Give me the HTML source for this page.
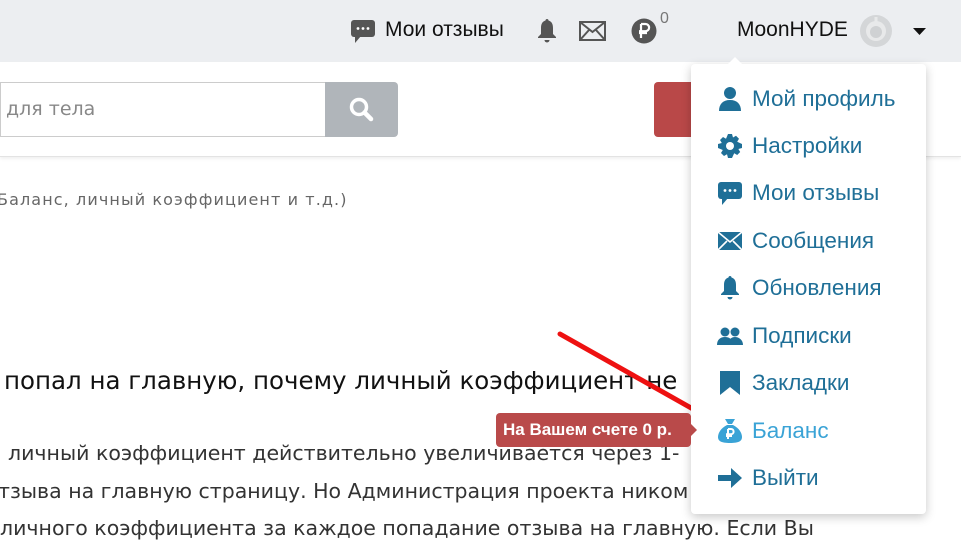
<!DOCTYPE html>
<html><head><meta charset="utf-8"><style>
*{margin:0;padding:0;box-sizing:border-box}
body{width:961px;height:550px;overflow:hidden;background:#fff;position:relative;font-family:"DejaVu Sans","Liberation Sans",sans-serif}
.top{position:absolute;left:0;top:0;width:961px;height:62px;background:#eceef1}
.hdr{position:absolute;left:0;top:62px;width:961px;height:95px;background:#fff;border-bottom:1px solid #e3e3e3;box-shadow:0 2px 3px rgba(0,0,0,.06)}
.t{position:absolute;white-space:nowrap}
.menu{position:absolute;left:691px;top:64px;width:235px;height:450px;background:#fff;border-radius:4px;box-shadow:0 3px 10px rgba(0,0,0,.22)}
.mi{position:absolute;left:26px;font-family:"Liberation Sans",sans-serif;font-size:22.5px;color:#1f6f97;white-space:nowrap;display:flex;align-items:center}
.mi svg{width:26px;height:26px;margin-right:9px;fill:#1f6f97}
p.b{position:absolute;left:0;font-size:20.5px;color:#333;white-space:nowrap}
</style></head><body>
<div class="top"></div>
<svg class="t" style="left:350px;top:19px" width="26" height="25" viewBox="0 0 26 25"><rect x="1" y="1" width="24" height="17" rx="3" fill="#555"/><path d="M5 17 L5 24 L11 17Z" fill="#555"/><circle cx="8" cy="9.5" r="1.4" fill="#fff"/><circle cx="13" cy="9.5" r="1.4" fill="#fff"/><circle cx="18" cy="9.5" r="1.4" fill="#fff"/></svg>
<div class="t" style="left:385px;top:18px;font-family:'Liberation Sans',sans-serif;font-size:21px;color:#111">Мои отзывы</div>
<svg class="t" style="left:536px;top:18px" width="22" height="26" viewBox="0 0 22 26"><path d="M11 1c1 0 1.5.7 1.5 1.5C16 3.5 17 6.5 17 10v6l3 3v1H2v-1l3-3v-6c0-3.5 1-6.5 4.5-7.5C9.5 1.7 10 1 11 1z" fill="#555"/><path d="M8.5 22h5a2.5 2.5 0 0 1-5 0z" fill="#555"/></svg>
<svg class="t" style="left:579px;top:21px" width="27" height="20" viewBox="0 0 27 20"><rect x="1" y="1" width="25" height="18" fill="none" stroke="#555" stroke-width="2"/><path d="M1 1 L13.5 11 L26 1 M1 19 L10 9 M26 19 L17 9" fill="none" stroke="#555" stroke-width="2"/></svg>
<svg class="t" style="left:631px;top:18px" width="26" height="26" viewBox="0 0 26 26"><circle cx="13" cy="13" r="12.5" fill="#555"/><path d="M10 6v14 M8 15h8 M10 6h4.5a3.6 3.6 0 0 1 0 7.2H8" fill="none" stroke="#fff" stroke-width="2.2"/></svg>
<div class="t" style="left:660px;top:10px;font-family:'Liberation Sans',sans-serif;font-size:16px;color:#777">0</div>
<div class="t" style="left:737px;top:18px;font-family:'Liberation Sans',sans-serif;font-size:21px;color:#111">MoonHYDE</div>
<svg class="t" style="left:859px;top:14px" width="34" height="34" viewBox="0 0 34 34"><circle cx="17" cy="17" r="16" fill="#d4d6d8"/><circle cx="17" cy="17" r="10" fill="#e8e9ea"/><circle cx="17" cy="18" r="6" fill="#cfd1d3"/><rect x="15.5" y="3" width="3" height="8" fill="#e8e9ea"/></svg>
<svg class="t" style="left:913px;top:28px" width="13" height="8" viewBox="0 0 13 8"><path d="M0 0h13L6.5 7z" fill="#111"/></svg>

<div class="hdr"></div>
<div class="t" style="left:0;top:82px;width:326px;height:55px;border:1px solid #ccc;border-right:none;background:#fff"></div>
<div class="t" style="left:6px;top:98px;font-size:19px;color:#888">для тела</div>
<div class="t" style="left:325px;top:82px;width:73px;height:55px;background:#b0b5ba;border-radius:0 4px 4px 0"></div>
<svg class="t" style="left:348px;top:96px" width="26" height="26" viewBox="0 0 26 26"><circle cx="11" cy="11" r="7.5" fill="none" stroke="#fff" stroke-width="3.5"/><path d="M16.5 16.5 L23 23" stroke="#fff" stroke-width="4.5" stroke-linecap="round"/></svg>
<div class="t" style="left:654px;top:82px;width:40px;height:55px;background:#b94848;border-radius:4px 0 0 4px"></div>

<div class="t" style="left:-3px;top:190px;font-size:16px;letter-spacing:1.1px;color:#666">Баланс, личный коэффициент и т.д.)</div>
<div class="t" style="left:4px;top:366px;font-size:24.5px;color:#111">попал на главную, почему личный коэффициент не</div>
<p class="b" style="top:441px;left:8px">личный коэффициент действительно увеличивается через 1-</p>
<p class="b" style="top:479px;left:-2px">тзыва на главную страницу. Но Администрация проекта ником</p>
<p class="b" style="top:516px;left:0">личного коэффициента за каждое попадание отзыва на главную. Если Вы</p>

<svg class="t" style="left:0;top:0" width="961" height="550"><path d="M560 334 L700 413" stroke="#ee1111" stroke-width="5" stroke-linecap="round"/><path d="M716 425 L688 421 L699 402Z" fill="#ee1111"/></svg>

<div class="menu">
<div class="mi" style="top:22px"><svg viewBox="0 0 26 26"><circle cx="13" cy="7" r="6"/><path d="M2 25c0-7 4-11 11-11s11 4 11 11z"/></svg>Мой профиль</div>
<div class="mi" style="top:69px"><svg viewBox="0 0 26 26"><path d="M11 1h4l1 3.5 3-1.8 3 3-1.8 3L25 11v4l-3.6 1 1.8 3-3 3-3-1.8L15 25h-4l-1-3.8-3 1.8-3-3 1.8-3L1 15v-4l3.8-1L3 7l3-3 3 1.8z"/><circle cx="13" cy="13" r="4" fill="#fff"/></svg>Настройки</div>
<div class="mi" style="top:116px"><svg viewBox="0 0 26 26"><rect x="1" y="2" width="24" height="17" rx="3"/><path d="M5 18v7l6-7z"/><circle cx="8" cy="10.5" r="1.4" fill="#fff"/><circle cx="13" cy="10.5" r="1.4" fill="#fff"/><circle cx="18" cy="10.5" r="1.4" fill="#fff"/></svg>Мои отзывы</div>
<div class="mi" style="top:164px"><svg viewBox="0 0 26 26"><path d="M1 4h24v18H1z"/><path d="M1 4l12 10L25 4M1 22l9-9M25 22l-9-9" fill="none" stroke="#fff" stroke-width="1.6"/></svg>Сообщения</div>
<div class="mi" style="top:211px"><svg viewBox="0 0 26 26"><path d="M13 1c1 0 1.5.7 1.5 1.5C18 3.5 19 6.5 19 10v6l3 3v1H4v-1l3-3v-6c0-3.5 1-6.5 4.5-7.5C11.5 1.7 12 1 13 1z"/><path d="M10.5 22h5a2.5 2.5 0 0 1-5 0z"/></svg>Обновления</div>
<div class="mi" style="top:259px"><svg viewBox="0 0 26 26"><circle cx="8" cy="9" r="4.5"/><circle cx="18" cy="9" r="4.5"/><path d="M0 22c0-5 3-8 8-8s8 3 8 8z"/><path d="M11 22c0-5 3-8 7-8s8 3 8 8z"/></svg>Подписки</div>
<div class="mi" style="top:306px"><svg viewBox="0 0 26 26"><path d="M3 1h20v24l-10-8-10 8z"/></svg>Закладки</div>
<div class="mi" style="top:354px;color:#3aa3d6"><svg viewBox="0 0 26 26" style="fill:#3aa3d6"><path d="M8 1h10l-3 5h-4z"/><path d="M10 7h6c6 3 9 8 9 12 0 4-3 6-12 6S1 23 1 19c0-4 3-9 9-12z"/><path d="M11 11v10M9 18h6M11 11h3a2.6 2.6 0 0 1 0 5.2H9" fill="none" stroke="#fff" stroke-width="2"/></svg>Баланс</div>
<div class="mi" style="top:401px"><svg viewBox="0 0 26 26"><path d="M1 10h13V3l11 10-11 10v-7H1z"/></svg>Выйти</div>
</div>
<svg class="t" style="left:727px;top:57px" width="16" height="8" viewBox="0 0 16 8"><path d="M0 8L8 0l8 8z" fill="#fff"/></svg>

<div class="t" style="left:496px;top:413px;width:195px;height:34px;background:#b94a4a;border-radius:4px"></div>
<svg class="t" style="left:690px;top:423px" width="7" height="14" viewBox="0 0 7 14"><path d="M0 0l7 7-7 7z" fill="#b94a4a"/></svg>
<div class="t" style="left:503px;top:420px;font-family:'Liberation Sans',sans-serif;font-weight:bold;font-size:17px;color:#fff">На Вашем счете 0 р.</div>
</body></html>
